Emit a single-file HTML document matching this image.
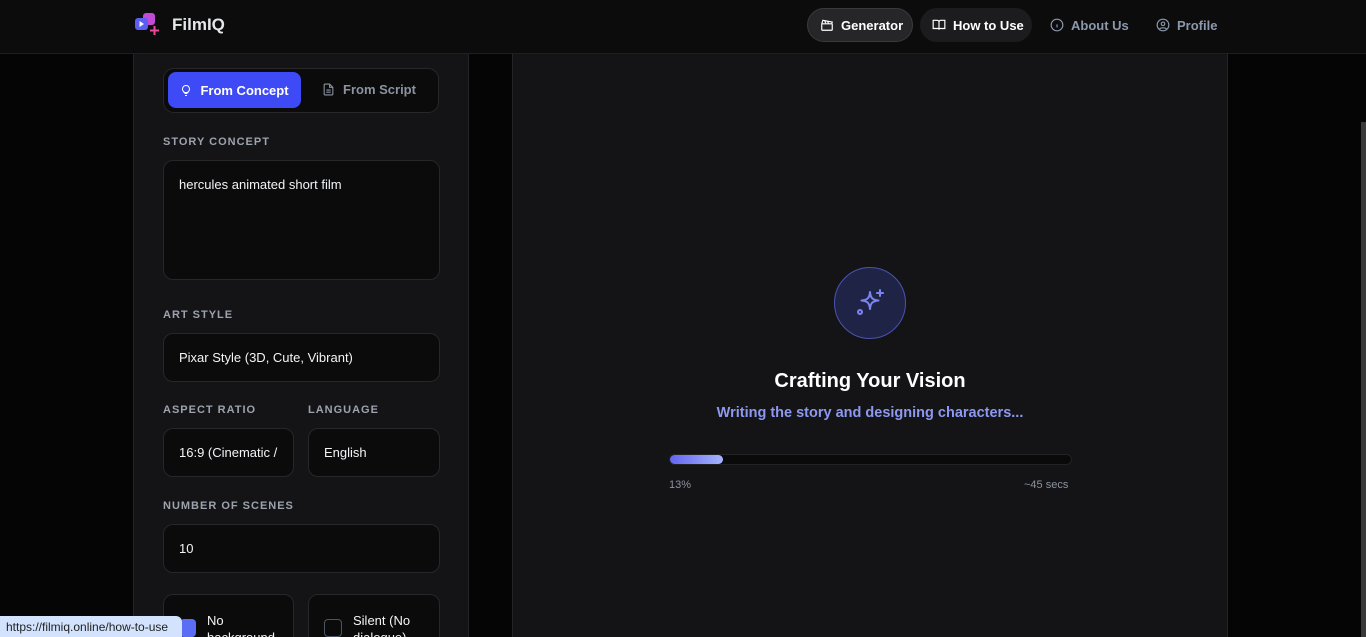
<!DOCTYPE html>
<html><head><style>
*{box-sizing:border-box;margin:0;padding:0}
html,body{width:1366px;height:637px;overflow:hidden}
body{background:#050505;font-family:"Liberation Sans",sans-serif;position:relative;color:#e5e7eb}
svg{flex-shrink:0}
.nav{position:absolute;left:0;top:0;width:1366px;height:54px;background:#0c0c0d;border-bottom:1px solid #1f1f22}
.logo{position:absolute;left:135px;top:12px}
.brand{position:absolute;left:172px;top:15px;font-size:17px;font-weight:bold;color:#e5e7eb}
.nb{position:absolute;top:8px;height:34px;border-radius:17px;font-size:13px;font-weight:bold;display:flex;align-items:center;gap:7px;padding:0 12px;white-space:nowrap}
.panel{position:absolute;left:133px;top:54px;width:336px;height:583px;background:#141416;border:1px solid #242428;border-top:none;border-bottom:none}
.right{position:absolute;left:512px;top:54px;width:716px;height:583px;background:#141416;border:1px solid #242428;border-top:none;border-bottom:none}
.lbl{position:absolute;left:163px;font-size:11px;font-weight:bold;letter-spacing:1px;color:#9ca3af}
.box{position:absolute;background:#0b0b0c;border:1px solid #27272a;border-radius:10px;font-size:13px;color:#f3f4f6;padding:0 15px;display:flex;align-items:center;white-space:nowrap;overflow:hidden}
</style></head><body>
<div class="nav">
<svg class="logo" width="28" height="24" viewBox="0 0 28 24"><rect x="8" y="1" width="12" height="12" rx="3" fill="#c04bd6"/><rect x="0" y="6" width="13" height="12" rx="3" fill="#5b5ef0"/><path d="M4.5 9l4.5 3-4.5 3z" fill="#fff"/><path d="M19.5 14v9M15 18.5h9" stroke="#ec4899" stroke-width="2"/></svg>
<div class="brand">FilmIQ</div>
<div class="nb" style="left:807px;width:106px;background:#262628;border:1px solid #3a3a3d;color:#fff">
<svg width="14" height="14" viewBox="0 0 24 24" fill="none" stroke="#fff" stroke-width="2"><rect x="3" y="10" width="18" height="11" rx="1"/><path d="M3 10l2-6 16 3-1 3M8 5l2 4M13 6l2 4"/></svg>Generator</div>
<div class="nb" style="left:920px;width:112px;background:#1c1c1e;color:#fff">
<svg width="14" height="14" viewBox="0 0 24 24" fill="none" stroke="#fff" stroke-width="2"><path d="M2 4h7a3 3 0 013 3v13a2 2 0 00-2-2H2zM22 4h-7a3 3 0 00-3 3v13a2 2 0 012-2h8z"/></svg>How to Use</div>
<div class="nb" style="left:1038px;color:#8b98ad">
<svg width="14" height="14" viewBox="0 0 24 24" fill="none" stroke="#8b98ad" stroke-width="2"><circle cx="12" cy="12" r="10"/><path d="M12 16v-5M12 8h.01"/></svg>About Us</div>
<div class="nb" style="left:1144px;color:#8b98ad">
<svg width="14" height="14" viewBox="0 0 24 24" fill="none" stroke="#8b98ad" stroke-width="2"><circle cx="12" cy="12" r="10"/><circle cx="12" cy="10" r="3"/><path d="M6 19c2-3 10-3 12 0"/></svg>Profile</div>
</div>
<div class="panel"></div>
<div class="box" style="left:163px;top:68px;width:276px;height:45px;padding:0;border-radius:11px"></div>
<div style="position:absolute;left:168px;top:72px;width:133px;height:36px;background:#3d4af5;border-radius:8px;color:#fff;font-size:13px;font-weight:bold;display:flex;align-items:center;justify-content:center;gap:8px">
<svg width="12" height="15" viewBox="0 0 24 24" fill="none" stroke="#fff" stroke-width="2"><path d="M9 18h6M10 22h4M12 2a7 7 0 00-4 12.7V16h8v-1.3A7 7 0 0012 2z"/></svg>From Concept</div>
<div style="position:absolute;left:322px;top:82px;color:#8b93a1;font-size:13px;font-weight:bold;display:flex;gap:8px;align-items:center">
<svg width="13" height="15" viewBox="0 0 24 24" fill="none" stroke="#8b93a1" stroke-width="2"><path d="M14 2H6a2 2 0 00-2 2v16a2 2 0 002 2h12a2 2 0 002-2V8zM14 2v6h6M8 13h8M8 17h8"/></svg>From Script</div>
<div class="lbl" style="top:136px">STORY CONCEPT</div>
<div class="box" style="left:163px;top:160px;width:277px;height:120px;align-items:flex-start;padding-top:16px">hercules animated short film</div>
<div class="lbl" style="top:309px">ART STYLE</div>
<div class="box" style="left:163px;top:333px;width:277px;height:49px">Pixar Style (3D, Cute, Vibrant)</div>
<div class="lbl" style="top:404px">ASPECT RATIO</div>
<div class="lbl" style="top:404px;left:308px">LANGUAGE</div>
<div class="box" style="left:163px;top:428px;width:131px;height:49px">16:9 (Cinematic /</div>
<div class="lbl" style="top:500px">NUMBER OF SCENES</div>
<div class="box" style="left:308px;top:428px;width:132px;height:49px">English</div>
<div class="box" style="left:163px;top:524px;width:277px;height:49px">10</div>
<div class="box" style="left:163px;top:594px;width:131px;height:60px;align-items:flex-start;padding:17px 0 0 43px;line-height:17px;white-space:normal">No<br>background</div>
<div class="box" style="left:308px;top:594px;width:132px;height:60px;align-items:flex-start;padding:17px 0 0 44px;line-height:17px;white-space:normal">Silent (No<br>dialogue)</div>
<div style="position:absolute;left:324px;top:619px;width:18px;height:18px;border:1px solid #4b5563;border-radius:4px"></div>
<div style="position:absolute;left:180px;top:619px;width:16px;height:18px;background:#5b6cf5;border-radius:4px"></div>
<div style="position:absolute;left:0;top:616px;width:182px;height:21px;background:#d3e3fd;border-top-right-radius:6px;color:#1f1f1f;font-size:12px;padding:4px 6px;white-space:nowrap">https://filmiq.online/how-to-use</div>
<div class="right"></div>
<div style="position:absolute;left:834px;top:267px;width:72px;height:72px;border-radius:50%;background:#1f2447;border:1.5px solid #4a53b0"></div>
<svg style="position:absolute;left:855px;top:288px;width:30px;height:30px" width="30" height="30" viewBox="0 0 30 30" fill="none" stroke="#7b84f0" stroke-width="2" stroke-linecap="round" stroke-linejoin="round"><path d="M15 4c.6 6 2.5 8 8.5 8.5-6 .6-8 2.5-8.5 8.5-.6-6-2.5-8-8.5-8.5 6-.6 8-2.5 8.5-8.5z"/><path d="M25 2v6M22 5h6"/><circle cx="5" cy="24" r="2"/></svg>
<div style="position:absolute;left:512px;top:370px;width:716px;text-align:center;font-size:20px;font-weight:bold;color:#fff">Crafting Your Vision</div>
<div style="position:absolute;left:512px;top:405px;width:716px;text-align:center;font-size:14.5px;font-weight:bold;color:#8d98f0">Writing the story and designing characters...</div>
<div style="position:absolute;left:669px;top:454px;width:403px;height:11px;background:#0a0a0b;border:1px solid #222;border-radius:6px"></div>
<div style="position:absolute;left:670px;top:455px;width:53px;height:9px;border-radius:5px;background:linear-gradient(90deg,#6366f1,#a5b4fc)"></div>
<div style="position:absolute;left:669px;top:479px;font-size:11px;color:#8b93a1">13%</div>
<div style="position:absolute;left:1024px;top:479px;font-size:11px;color:#8b93a1">~45 secs</div>
<div style="position:absolute;left:1361px;top:122px;width:5px;height:515px;background:#3a3a3a"></div>
</body></html>
